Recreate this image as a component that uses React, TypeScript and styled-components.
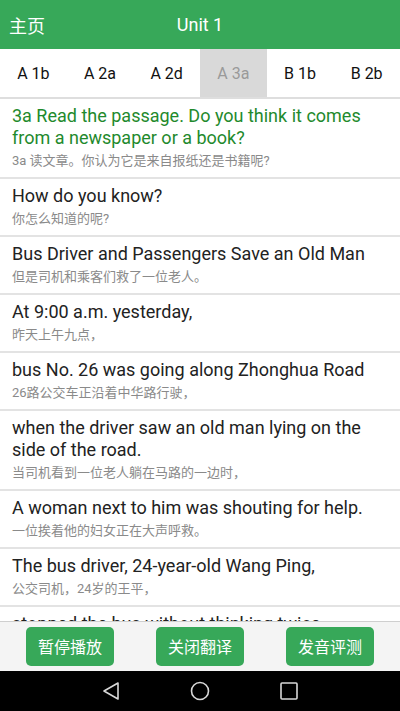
import React from "react";
import styled, { createGlobalStyle } from "styled-components";

const GlobalStyle = createGlobalStyle`
  html, body { margin: 0; padding: 0; background: #fff; }
  body { font-family: Roboto, "Noto Sans CJK SC", sans-serif; }
  * { box-sizing: border-box; }
`;

const Screen = styled.div`
  width: 400px;
  height: 711px;
  display: flex;
  flex-direction: column;
  overflow: hidden;
  background: #fff;
`;

const Header = styled.header`
  height: 49px;
  flex: none;
  background: #37a859;
  display: grid;
  grid-template-columns: 1fr auto 1fr;
  align-items: center;
  padding: 0 9px;
  color: #fff;
  font-size: 18px;
`;

const HomeLink = styled.span`
  font-family: "Noto Sans CJK SC", sans-serif;
  font-size: 18px;
  justify-self: start;
`;

const Title = styled.span`
  font-family: Roboto, sans-serif;
  font-size: 18px;
`;

const Tabs = styled.nav`
  height: 50px;
  flex: none;
  display: grid;
  grid-template-columns: repeat(6, 1fr);
  border-bottom: 2px solid #dedede;
`;

const Tab = styled.div<{ $active?: boolean }>`
  display: flex;
  align-items: center;
  justify-content: center;
  font-size: 16px;
  color: ${(p) => (p.$active ? "#9a9a9a" : "#111")};
  background: ${(p) => (p.$active ? "#d9d9d9" : "transparent")};
`;

const List = styled.div`
  flex: 1;
  overflow: hidden;
`;

const Row = styled.div`
  padding: 6px 12px 7px;
  border-bottom: 2px solid #e3e3e3;
`;

const English = styled.div<{ $accent?: boolean }>`
  font-family: Roboto, sans-serif;
  font-size: 18px;
  line-height: 22px;
  color: ${(p) => (p.$accent ? "#1f8a2d" : "#222")};
`;

const Chinese = styled.div`
  margin-top: 3px;
  font-family: Roboto, "Noto Sans CJK SC", sans-serif;
  font-size: 13px;
  line-height: 18px;
  color: #8a8a8a;
`;

const BottomBar = styled.div`
  height: 50px;
  flex: none;
  background: #f4f4f4;
  border-top: 1px solid #cfcfcf;
  display: flex;
  align-items: center;
  justify-content: space-between;
  padding: 0 26px;
`;

const ActionButton = styled.button`
  width: 88px;
  height: 39px;
  border: none;
  border-radius: 5px;
  background: #37a859;
  color: #fff;
  font-family: "Noto Sans CJK SC", sans-serif;
  font-size: 16px;
  line-height: 39px;
  padding: 0;
  white-space: nowrap;
`;

const NavBar = styled.div`
  height: 40px;
  flex: none;
  background: #000;
  display: grid;
  grid-template-columns: repeat(3, 89px);
  justify-content: center;
  align-items: center;
  justify-items: center;
`;

const tabs = ["A 1b", "A 2a", "A 2d", "A 3a", "B 1b", "B 2b"];

const rows: { en: string; zh: string; accent?: boolean }[] = [
  {
    en: "3a Read the passage. Do you think it comes from a newspaper or a book?",
    zh: "3a 读文章。你认为它是来自报纸还是书籍呢?",
    accent: true,
  },
  { en: "How do you know?", zh: "你怎么知道的呢?" },
  { en: "Bus Driver and Passengers Save an Old Man", zh: "但是司机和乘客们救了一位老人。" },
  { en: "At 9:00 a.m. yesterday,", zh: "昨天上午九点，" },
  { en: "bus No. 26 was going along Zhonghua Road", zh: "26路公交车正沿着中华路行驶，" },
  {
    en: "when the driver saw an old man lying on the side of the road.",
    zh: "当司机看到一位老人躺在马路的一边时，",
  },
  { en: "A woman next to him was shouting for help.", zh: "一位挨着他的妇女正在大声呼救。" },
  { en: "The bus driver, 24-year-old Wang Ping,", zh: "公交司机，24岁的王平，" },
  { en: "stopped the bus without thinking twice.", zh: "他毫不犹豫地停下了公交车。" },
];

export default function App() {
  return (
    <>
      <GlobalStyle />
      <Screen>
        <Header>
          <HomeLink>主页</HomeLink>
          <Title>Unit 1</Title>
          <span />
        </Header>
        <Tabs>
          {tabs.map((t) => (
            <Tab key={t} $active={t === "A 3a"}>
              {t}
            </Tab>
          ))}
        </Tabs>
        <List>
          {rows.map((r, i) => (
            <Row key={i}>
              <English $accent={r.accent}>{r.en}</English>
              <Chinese>{r.zh}</Chinese>
            </Row>
          ))}
        </List>
        <BottomBar>
          <ActionButton>暂停播放</ActionButton>
          <ActionButton>关闭翻译</ActionButton>
          <ActionButton>发音评测</ActionButton>
        </BottomBar>
        <NavBar>
          <svg width="18" height="20" viewBox="0 0 18 20">
            <path d="M16 2 L2 10 L16 18 Z" fill="none" stroke="#d8d8d8" strokeWidth="1.6" strokeLinejoin="round" />
          </svg>
          <svg width="20" height="20" viewBox="0 0 20 20">
            <circle cx="10" cy="10" r="8.5" fill="none" stroke="#d8d8d8" strokeWidth="1.6" />
          </svg>
          <svg width="18" height="18" viewBox="0 0 18 18">
            <rect x="1" y="1" width="16" height="16" rx="1" fill="none" stroke="#d8d8d8" strokeWidth="1.6" />
          </svg>
        </NavBar>
      </Screen>
    </>
  );
}
